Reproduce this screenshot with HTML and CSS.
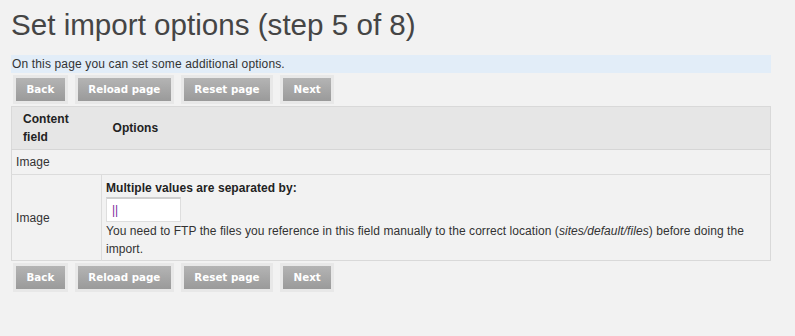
FILE: index.html
```html
<!DOCTYPE html>
<html>
<head>
<meta charset="utf-8">
<title>Set import options</title>
<link rel="stylesheet" href="styles.css">
</head>
<body>
<h1 class="title">Set import options (step 5 of 8)</h1>
<div class="info">On this page you can set some additional options.</div>
<div class="actions">
  <span class="btn-wrap"><button class="btn">Back</button></span>
  <span class="btn-wrap"><button class="btn">Reload page</button></span>
  <span class="btn-wrap"><button class="btn">Reset page</button></span>
  <span class="btn-wrap"><button class="btn">Next</button></span>
</div>
<table class="opts">
  <colgroup><col class="col-field"><col></colgroup>
  <thead>
    <tr><th class="th-field">Content field</th><th class="th-opts">Options</th></tr>
  </thead>
  <tbody>
    <tr class="row-group"><td colspan="2" class="td-group">Image</td></tr>
    <tr class="row-item">
      <td class="td-field">Image</td>
      <td class="td-opts">
        <label class="lbl">Multiple values are separated by:</label>
        <input class="sep" type="text" value="||">
        <div class="help">You need to FTP the files you reference in this field manually to the correct location (<em>sites/default/files</em>) before doing the import.</div>
      </td>
    </tr>
  </tbody>
</table>
<div class="actions actions-bottom">
  <span class="btn-wrap"><button class="btn">Back</button></span>
  <span class="btn-wrap"><button class="btn">Reload page</button></span>
  <span class="btn-wrap"><button class="btn">Reset page</button></span>
  <span class="btn-wrap"><button class="btn">Next</button></span>
</div>
</body>
</html>
```
FILE: styles.css
```css
html, body {
  margin: 0;
  padding: 0;
}
body {
  background: #f2f2f2;
  padding: 0 11px;
  font-family: "Liberation Sans", Arial, sans-serif;
  font-size: 12px;
  letter-spacing: 0.06px;
  color: #333;
  width: 760px;
}
.title {
  margin: 8px 0 0 0;
  font-size: 29.6px;
  line-height: 34px;
  letter-spacing: 0;
  font-weight: normal;
  color: #454545;
}
.info {
  margin-top: 13px;
  height: 18px;
  line-height: 18px;
  background: #e2edf8;
  padding-left: 1px;
  letter-spacing: 0.15px;
  color: #333;
}
.actions {
  display: flex;
  gap: 7px;
  margin: 2px 0 0 2px;
}
.btn-wrap {
  display: block;
  padding: 3px;
  background: #e8e8e8;
}
.btn {
  display: block;
  height: 23px;
  margin: 0;
  padding: 0 10.5px;
  border: none;
  background: linear-gradient(#b4b4b4, #9a9a9a);
  color: #fff;
  font-family: "DejaVu Sans", Verdana, sans-serif;
  font-weight: bold;
  font-size: 10.3px;
  letter-spacing: 0;
  line-height: 23px;
}
.opts {
  margin-top: 2px;
  width: 760px;
  table-layout: fixed;
  border-collapse: collapse;
  border: 1px solid #d9d9d9;
}
.col-field {
  width: 90px;
}
.opts th {
  background: #e6e6e6;
  text-align: left;
  font-weight: bold;
  line-height: 18px;
  padding: 3px 11px 3px 11px;
  color: #222;
  border-bottom: 1px solid #d6d6d6;
}
.opts td {
  line-height: 18px;
  vertical-align: middle;
  border-top: 1px solid #dcdcdc;
}
.td-group {
  padding: 3px 4px;
}
.td-field {
  padding: 3px 4px;
  border-right: 1px solid #dcdcdc;
}
.td-opts {
  padding: 4px 5px 2px 4px;
}
.lbl {
  display: block;
  font-weight: bold;
  color: #222;
}
.sep {
  display: block;
  box-sizing: border-box;
  width: 75px;
  height: 25px;
  margin: 0;
  padding: 0 5px;
  border: 1px solid #dedede;
  border-top: 2px solid #cfcfcf;
  background: #fff;
  font-family: "Liberation Sans", Arial, sans-serif;
  font-size: 12px;
  color: #7a1f9e;
}
.help {
  color: #333;
}
.actions-bottom {
  margin-top: 2px;
}
```
